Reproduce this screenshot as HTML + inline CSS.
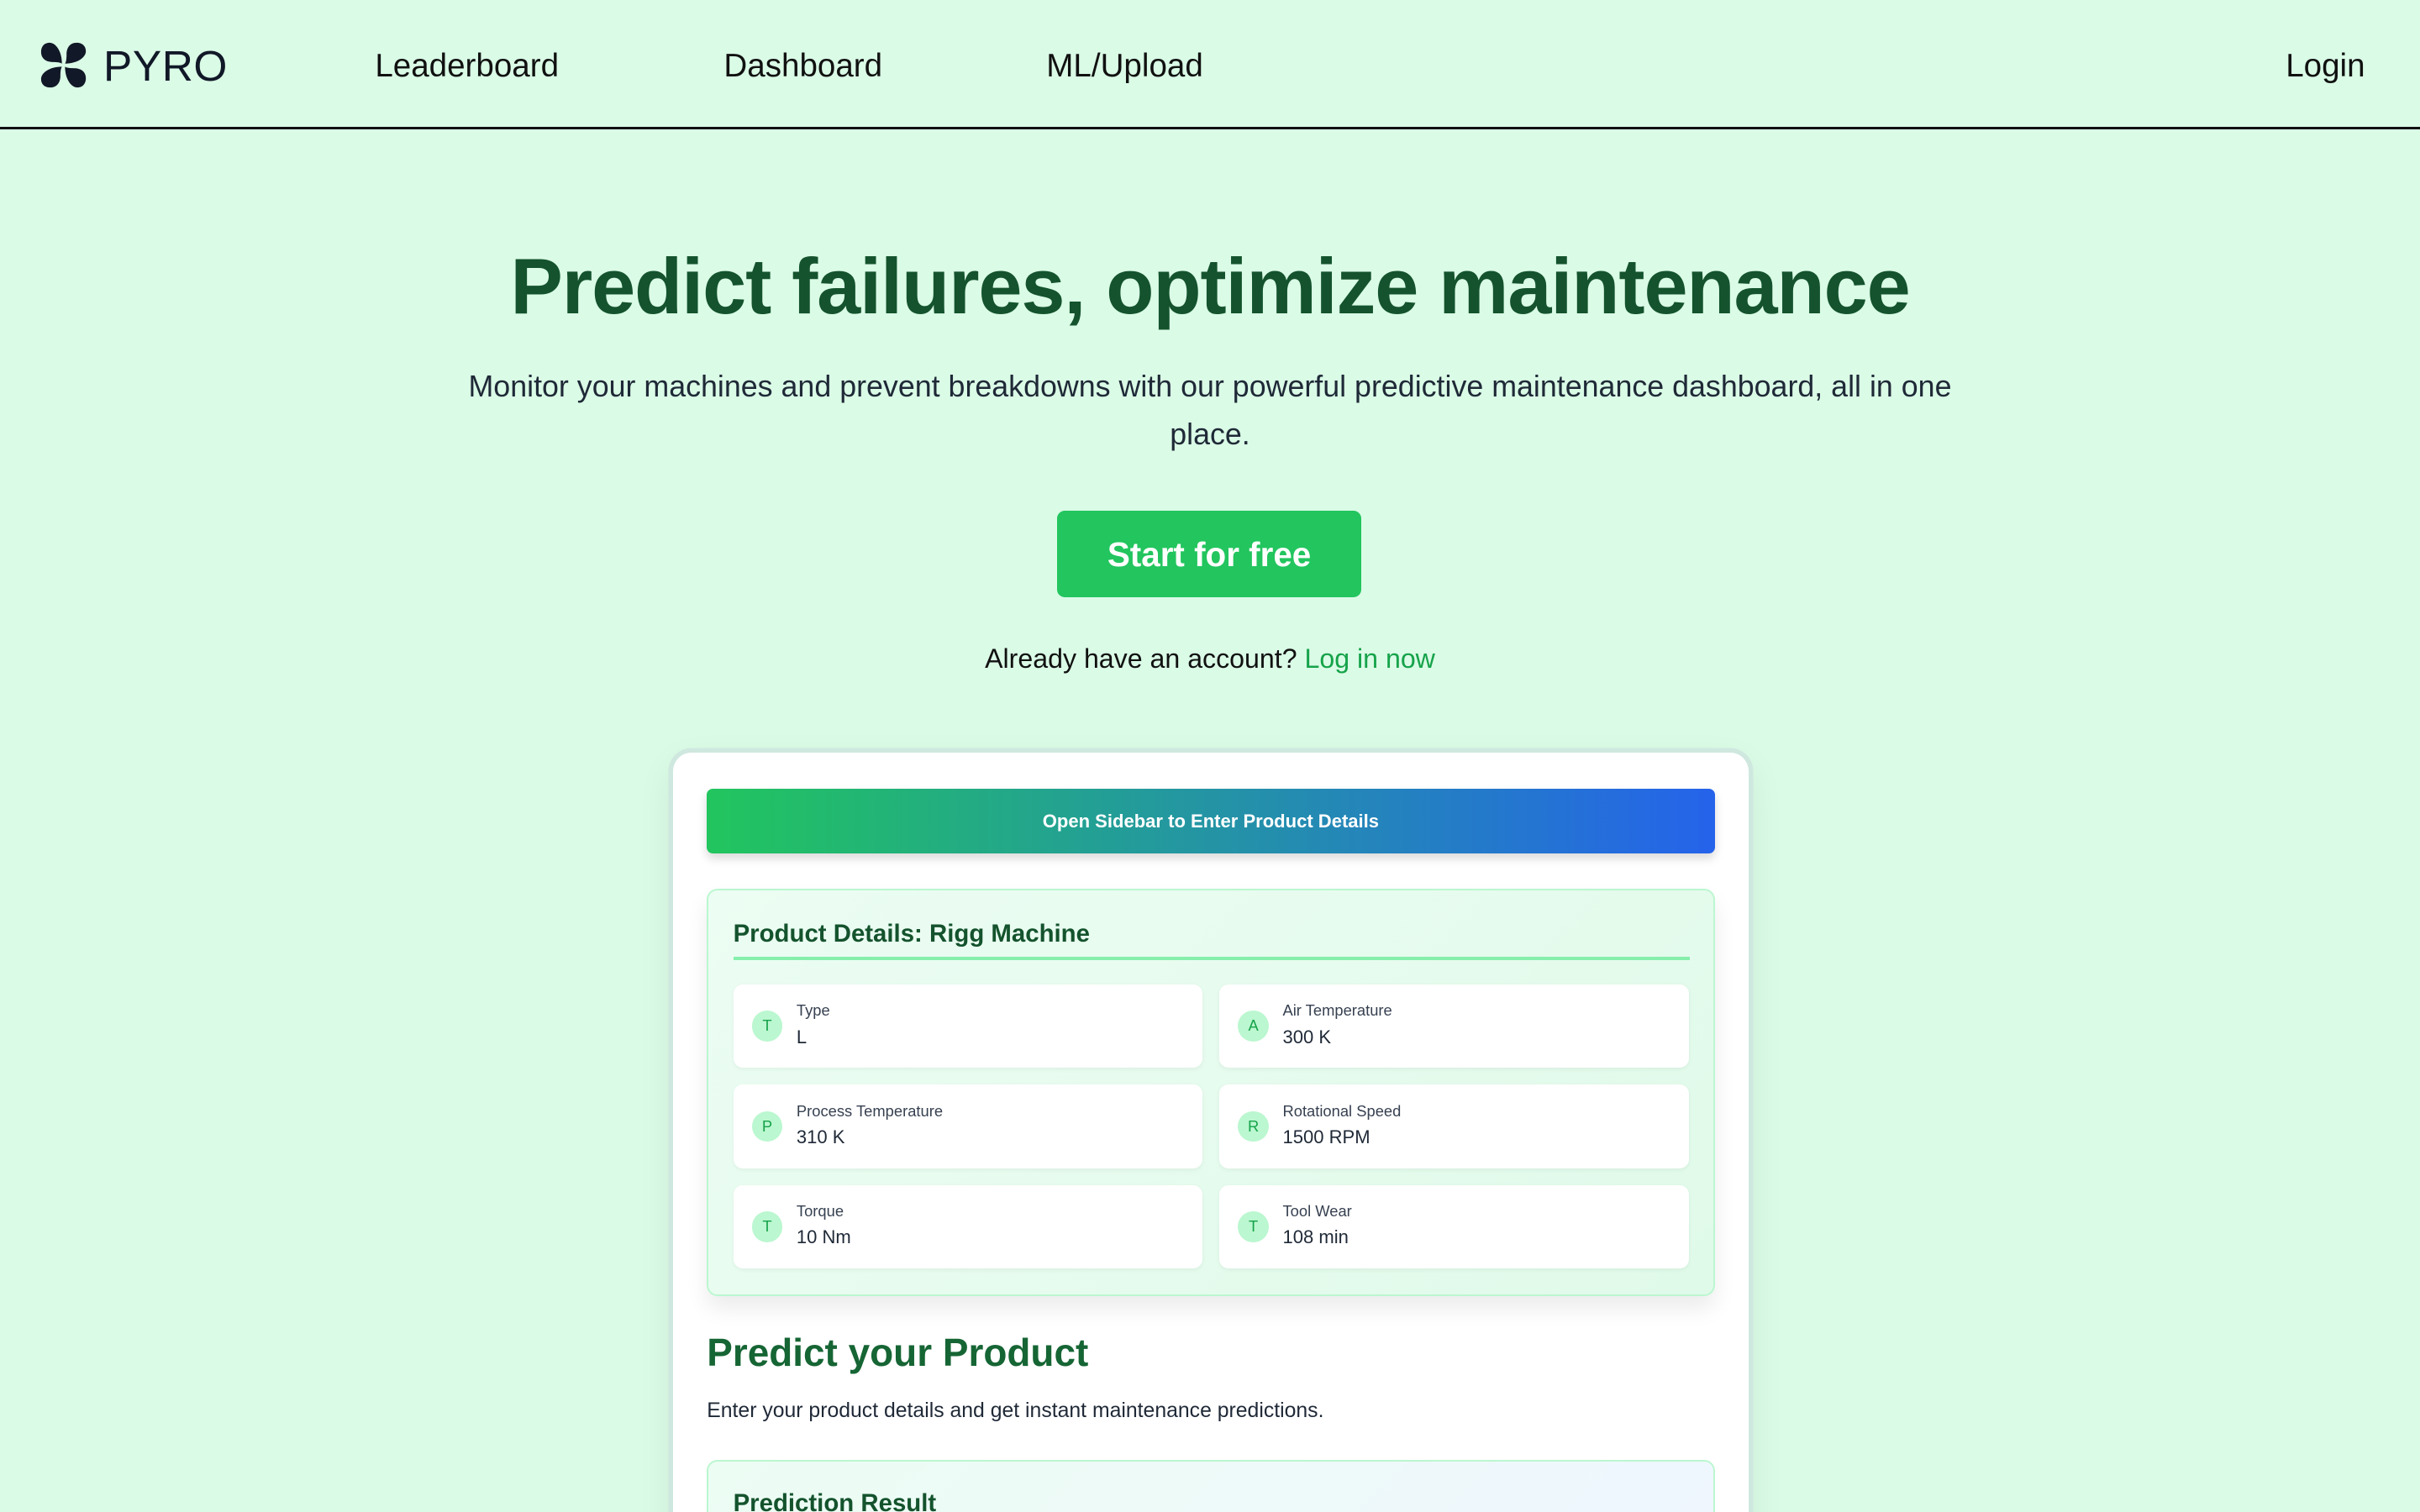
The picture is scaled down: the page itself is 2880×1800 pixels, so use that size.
<!DOCTYPE html>
<html><head><meta charset="utf-8"><style>
*{margin:0;padding:0;box-sizing:border-box}
html,body{width:2880px;height:1800px;overflow:hidden;background:#dafbe6}
#w{zoom:1.83673;width:1568px;height:980px;position:relative;font-family:"Liberation Sans",sans-serif;color:#111827}
.a{position:absolute}
nav{position:absolute;left:0;top:0;width:1568px;height:84px;border-bottom:2px solid #111;background:#dafbe6}
.ni{position:absolute;top:31px;font-size:21px;color:#111}
h1{position:absolute;top:156px;left:0;width:1568px;text-align:center;font-size:51px;font-weight:bold;color:#14532d;letter-spacing:-0.6px}
.p{position:absolute;top:235px;left:290px;width:988px;text-align:center;font-size:19.5px;line-height:31px;color:#1f2937}
.btn{left:685px;top:331px;width:197px;height:56px;background:#22c55e;border-radius:5px;color:#fff;font-weight:bold;font-size:22px;text-align:center;line-height:57px}
.card{left:436px;top:488px;width:697px;height:520px;background:#fff;border-radius:12px;box-shadow:0 0 0 3px #cfe8df,0 8px 24px rgba(0,0,0,.08)}
.gb{left:458px;top:511px;width:653px;height:42px;border-radius:4px;background:linear-gradient(90deg,#22c55e,#2563eb);color:#fff;font-weight:bold;font-size:12px;text-align:center;line-height:42px;box-shadow:0 3px 6px rgba(0,0,0,.15)}
.pd{left:458px;top:576px;width:653px;height:264px;border:1.5px solid #bbf7d0;border-radius:7px;background:linear-gradient(135deg,#ecfdf3,#e0fae9);box-shadow:0 8px 14px rgba(0,0,0,.08)}
.it{position:absolute;width:304px;height:54px;background:#fff;border-radius:6px;box-shadow:0 1px 3px rgba(0,0,0,.05)}
.ci{position:absolute;left:12px;top:17px;width:20px;height:20px;border-radius:50%;background:#bbf7d0;color:#16a34a;font-size:10px;text-align:center;line-height:20px}
.lb{position:absolute;left:41px;top:11px;font-size:10px;color:#374151}
.vl{position:absolute;left:41px;top:27px;font-size:12px;color:#1f2937}
</style></head><body><div id="w">
<nav>
<svg class="a" style="left:26px;top:27px" width="30" height="30" viewBox="0 0 30 30" fill="#111827">
<g id="pt"><path d="M14 14 C14 6 10 0.5 6 0.5 C2.5 0.5 0.5 3 0.5 6.5 C0.5 11 4 13 8 13 C11 13 13 13.3 14 14Z"/></g>
<use href="#pt" transform="rotate(90 15 15)"/><use href="#pt" transform="rotate(180 15 15)"/><use href="#pt" transform="rotate(270 15 15)"/>
</svg>
<div class="a" style="left:67px;top:26px;font-size:28px;color:#111827;letter-spacing:0.3px">PYRO</div>
<div class="ni" style="left:243px">Leaderboard</div>
<div class="ni" style="left:469px">Dashboard</div>
<div class="ni" style="left:678px">ML/Upload</div>
<div class="ni" style="left:1481px">Login</div>
</nav>
<h1>Predict failures, optimize maintenance</h1>
<div class="p">Monitor your machines and prevent breakdowns with our powerful predictive maintenance dashboard, all in one place.</div>
<div class="a btn">Start for free</div>
<div class="a" style="left:0;width:1568px;top:417px;text-align:center;font-size:17.5px;color:#111">Already have an account? <span style="color:#16a34a">Log in now</span></div>
<div class="a card"></div>
<div class="a gb">Open Sidebar to Enter Product Details</div>
<div class="a pd">
<div class="a" style="left:16px;top:19px;font-size:16px;font-weight:bold;color:#14532d">Product Details: Rigg Machine</div>
<div class="a" style="left:16px;top:43px;width:620px;height:2px;background:#86efac"></div>
<div class="it" style="left:16px;top:61px"><div class="ci">T</div><div class="lb">Type</div><div class="vl">L</div></div>
<div class="it" style="left:331px;top:61px"><div class="ci">A</div><div class="lb">Air Temperature</div><div class="vl">300 K</div></div>
<div class="it" style="left:16px;top:126px"><div class="ci">P</div><div class="lb">Process Temperature</div><div class="vl">310 K</div></div>
<div class="it" style="left:331px;top:126px"><div class="ci">R</div><div class="lb">Rotational Speed</div><div class="vl">1500 RPM</div></div>
<div class="it" style="left:16px;top:191px"><div class="ci">T</div><div class="lb">Torque</div><div class="vl">10 Nm</div></div>
<div class="it" style="left:331px;top:191px"><div class="ci">T</div><div class="lb">Tool Wear</div><div class="vl">108 min</div></div>
</div>
<div class="a" style="left:458px;top:862px;font-size:25px;font-weight:bold;color:#166534">Predict your Product</div>
<div class="a" style="left:458px;top:907px;font-size:13.5px;color:#1f2937">Enter your product details and get instant maintenance predictions.</div>
<div class="a" style="left:458px;top:946px;width:653px;height:80px;border:1.5px solid #bbf7d0;border-radius:7px;background:linear-gradient(135deg,#ecfdf3,#eff6ff)">
<div class="a" style="left:16px;top:18px;font-size:16px;font-weight:bold;color:#14532d">Prediction Result</div></div>
</div></body></html>
